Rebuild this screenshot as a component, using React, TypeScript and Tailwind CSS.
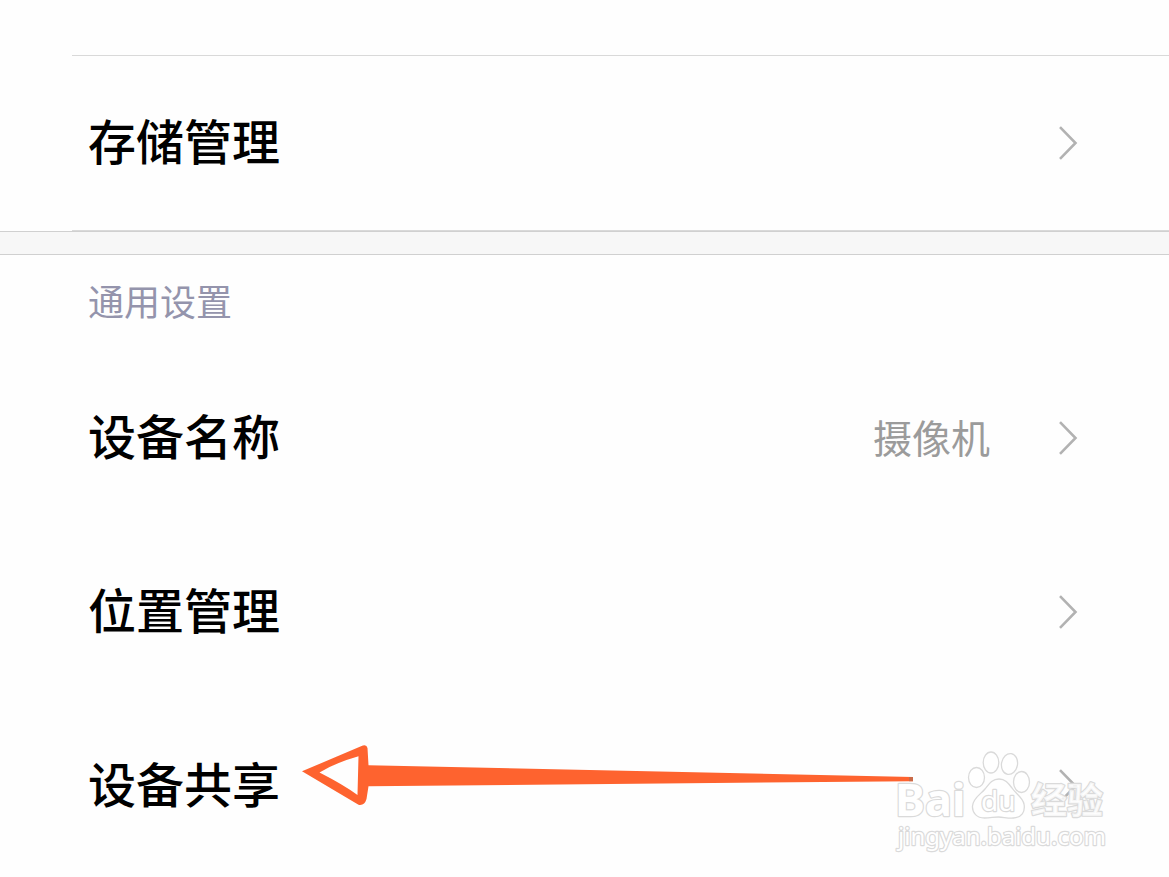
import React from "react";

type Setting = {
    label: string;
    value?: string;
    marked?: boolean;
};

const general: Setting[] = [
    { label: "设备名称", value: "摄像机" },
    { label: "位置管理" },
    { label: "设备共享", marked: true },
];

function Chevron() {
    return (
        <svg width="20" height="36" viewBox="0 0 20 36" fill="none" aria-hidden="true">
            <path d="M1 2.200 16.500 18 1 33.800" stroke="#b2b2b2" strokeWidth="2.600" />
        </svg>
    );
}

// Hand-drawn style arrow that points at a row's label
function Arrow() {
    return (
        <svg
            className="pointer-events-none absolute top-11 left-[300px]"
            width="616"
            height="64"
            viewBox="300 743 616 64"
            aria-hidden="true"
        >
            <path
                fill="#fe632f"
                fillRule="evenodd"
                d="M302 771.3 361 746.3Q366.500 743.500 367.500 748L368.500 765.300 913 777V781.200L368.500 786.200 366.500 799Q364.500 806 358.500 804.800ZM319.500 772.500Q344 785 357.500 795L358.500 756.200Q336 762.500 319.500 772.500Z"
            />
            <path fill="#c96a48" d="M909 777h4v4.200h-4z" />
        </svg>
    );
}

function SettingRow({ label, value, marked }: Setting) {
    return (
        <li className="relative">
            <button
                type="button"
                className="flex h-[174px] w-full items-center justify-between pr-[90px] pl-[88px] text-left"
            >
                <span className="pb-2 text-[48px] leading-[56px] font-medium text-black">{label}</span>
                <span className="flex items-center gap-[69px]">
                    {value && <span className="pb-1 text-[39px] leading-[48px] text-[#9b9b9b]">{value}</span>}
                    <Chevron />
                </span>
            </button>
            {marked && <Arrow />}
        </li>
    );
}

function Watermark() {
    return (
        <svg
            className="pointer-events-none absolute right-[57px] bottom-[20px]"
            width="222"
            height="108"
            viewBox="890 749 222 108"
            fill="#ffffff"
            fillOpacity="0.8"
            stroke="#dadada"
            strokeWidth="1.3"
            aria-hidden="true"
        >
            <ellipse cx="976.500" cy="777.500" rx="8" ry="10" />
            <ellipse cx="991" cy="762.500" rx="7.800" ry="10.500" />
            <ellipse cx="1009.500" cy="764" rx="8" ry="10.500" transform="rotate(10 1009.500 764)" />
            <ellipse cx="1021.500" cy="782" rx="8" ry="10.500" />
            <path d="M999 779c-7 0-10 5-14 10s-12 9-12.500 17c-.5 7 4.500 12 12 12 6 0 9-1 14-1s9 1.500 15 1c8-.5 12-6 10.500-14-1.500-7-8-10-12-16-4-5.500-7-9-13-9Z" />
            <g
                fontFamily="'Noto Sans', sans-serif"
                fillOpacity="1"
                strokeWidth="2.4"
                strokeLinejoin="round"
                className="[paint-order:stroke]"
            >
                <text x="895" y="816" fontSize="45" fontWeight="700">
                    Bai
                </text>
                <text x="981" y="811" fontSize="28">
                    du
                </text>
                <text x="898" y="845" fontSize="24">
                    jingyan.baidu.com
                </text>
                <text
                    x="1031"
                    y="814"
                    fontSize="36"
                    fontWeight="700"
                    fillOpacity="0.8"
                    fontFamily="'Noto Sans CJK SC', sans-serif"
                >
                    经验
                </text>
            </g>
        </svg>
    );
}

export default function App() {
    return (
        <main className="relative min-h-screen overflow-hidden bg-[#fefefe] pt-[55px] font-['Noto_Sans_CJK_SC',sans-serif]">
            <ul>
                <li className="ml-[72px] border-t border-[#d9d9d9]" />
                <SettingRow label="存储管理" />
                <li className="ml-[72px] border-t border-[#d9d9d9]" />
            </ul>
            <div className="h-6 border-y border-[#d0d0d0] bg-[#f7f7f7]" />
            <section>
                <h2 className="flex h-24 items-center pb-1.5 pl-[88px] text-[36px] leading-[48px] font-normal text-[#9494ac]">
                    通用设置
                </h2>
                <ul>
                    {general.map((item) => (
                        <SettingRow key={item.label} {...item} />
                    ))}
                </ul>
            </section>
            <Watermark />
        </main>
    );
}
